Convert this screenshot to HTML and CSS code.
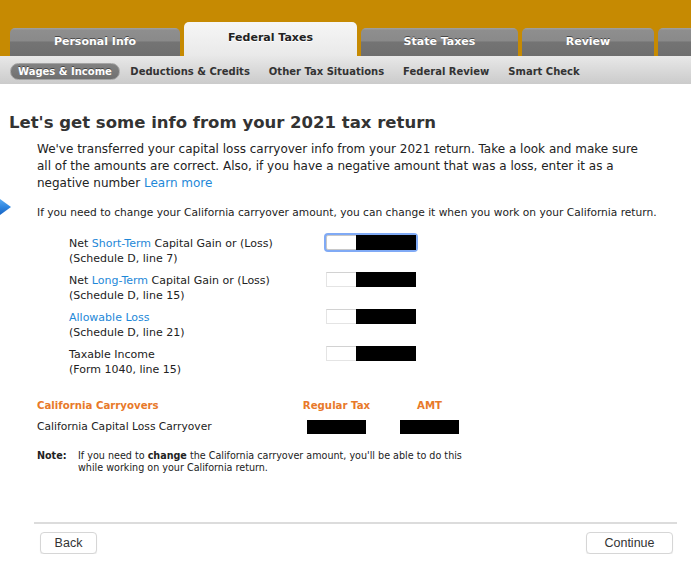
FILE: index.html
```html
<!DOCTYPE html>
<html lang="en">
<head>
<meta charset="utf-8">
<title>Federal Taxes - Capital loss carryover</title>
<link rel="stylesheet" href="styles.css">
</head>
<body>
<div class="topbar">
  <div class="tab tab-personal">Personal Info</div>
  <div class="tab tab-federal">Federal Taxes</div>
  <div class="tab tab-state">State Taxes</div>
  <div class="tab tab-review">Review</div>
  <div class="tab tab-more"></div>
</div>
<nav class="subnav">
  <span class="subnav-item current">Wages &amp; Income</span>
  <span class="subnav-item">Deductions &amp; Credits</span>
  <span class="subnav-item">Other Tax Situations</span>
  <span class="subnav-item">Federal Review</span>
  <span class="subnav-item">Smart Check</span>
</nav>
<main class="content">
  <h1 class="title">Let's get some info from your 2021 tax return</h1>
  <p class="intro">We've transferred your capital loss carryover info from your 2021 return. Take a look and make sure<br>all of the amounts are correct. Also, if you have a negative amount that was a loss, enter it as a<br>negative number <a class="link" href="#">Learn more</a></p>
  <p class="hint">
    <svg class="hint-arrow" viewBox="0 0 11 16" aria-hidden="true">
      <defs>
        <linearGradient id="ag" x1="0" y1="0" x2="0" y2="1">
          <stop offset="0" stop-color="#5aaaf2"/>
          <stop offset="0.5" stop-color="#2f86e0"/>
          <stop offset="1" stop-color="#1764c4"/>
        </linearGradient>
      </defs>
      <polygon points="0,0 11,8 0,16" fill="url(#ag)"/>
    </svg>
    If you need to change your California carryover amount, you can change it when you work on your California return.
  </p>
  <div class="fields">
    <div class="field">
      <div class="field-label">Net <a class="link" href="#">Short-Term</a> Capital Gain or (Loss)<br>(Schedule D, line 7)</div>
      <div class="amount focused"><span class="redact"></span></div>
    </div>
    <div class="field">
      <div class="field-label">Net <a class="link" href="#">Long-Term</a> Capital Gain or (Loss)<br>(Schedule D, line 15)</div>
      <div class="amount"><span class="redact"></span></div>
    </div>
    <div class="field">
      <div class="field-label"><a class="link" href="#">Allowable Loss</a><br>(Schedule D, line 21)</div>
      <div class="amount"><span class="redact"></span></div>
    </div>
    <div class="field">
      <div class="field-label">Taxable Income<br>(Form 1040, line 15)</div>
      <div class="amount"><span class="redact"></span></div>
    </div>
  </div>
  <div class="carry">
    <div class="carry-head">California Carryovers</div>
    <div class="carry-head center">Regular Tax</div>
    <div class="carry-head center">AMT</div>
    <div class="carry-label">California Capital Loss Carryover</div>
    <div class="center"><span class="block"></span></div>
    <div class="center"><span class="block"></span></div>
  </div>
  <div class="note">
    <div class="note-label">Note:</div>
    <div class="note-text">If you need to <b>change</b> the California carryover amount, you'll be able to do this<br>while working on your California return.</div>
  </div>
</main>
<footer class="footer">
  <button class="btn btn-back" type="button">Back</button>
  <button class="btn btn-continue" type="button">Continue</button>
</footer>
</body>
</html>
```
FILE: styles.css
```css
* { box-sizing: border-box; }
html, body { margin: 0; padding: 0; }
body {
  font-family: "DejaVu Sans", "Noto Sans", sans-serif;
  color: #222;
  background: #fff;
  width: 691px;
  overflow: hidden;
}

/* top tabs */
.topbar {
  height: 56px;
  background: #c68a02;
  display: flex;
  align-items: flex-end;
  gap: 4px;
  padding-left: 10px;
  overflow: hidden;
}
.tab {
  flex: none;
  height: 28px;
  border-radius: 5px 5px 0 0;
  background: linear-gradient(to bottom, #a2a2a2 0, #8e8e8e 8%, #8a8a8a 46%, #747474 50%, #6e6e6e 100%);
  color: #fff;
  font-weight: bold;
  font-size: 11px;
  text-align: center;
  line-height: 28px;
  text-shadow: 0 -1px 0 #4a4a4a;
}
.tab-personal { width: 170px; }
.tab-federal {
  width: 173px;
  height: 34px;
  background: linear-gradient(to bottom, #f6f6f6, #e9e9e9);
  color: #222;
  text-shadow: 0 1px 0 #fff;
  line-height: 31px;
}
.tab-state { width: 157px; }
.tab-review { width: 132px; }
.tab-more { width: 60px; }

/* sub navigation */
.subnav {
  height: 28px;
  padding-top: 2px;
  background: linear-gradient(to bottom, #e8e8e8, #cbcbcb);
  display: flex;
  align-items: center;
  padding-left: 10px;
  font-size: 10px;
  font-weight: bold;
  color: #333;
  white-space: nowrap;
}
.subnav-item { padding: 0 9.5px; }
.subnav-item.current {
  padding: 0 7px;
  height: 17px;
  line-height: 15px;
  border-radius: 9px;
  background: linear-gradient(to bottom, #828282, #6f6f6f);
  border: 1px solid #a4a4a4;
  color: #fff;
  text-shadow: 0 -1px 0 #444;
  margin-right: 1px;
}

/* content */
.title {
  margin: 29px 0 0 9px;
  font-size: 16.5px;
  line-height: 20px;
  font-weight: bold;
  color: #333;
}
.intro {
  margin: 8px 0 0 37px;
  font-size: 12px;
  line-height: 17px;
  color: #222;
}
.link { color: #1e88d8; text-decoration: none; }
.hint {
  position: relative;
  margin: 14px 0 0 37px;
  font-size: 10.65px;
  line-height: 14px;
}
.hint-arrow {
  position: absolute;
  left: -37px;
  top: -7px;
  width: 11px;
  height: 16px;
}

.fields {
  margin: 16px 0 0 69px;
  display: flex;
  flex-direction: column;
  gap: 7px;
}
.field { display: flex; align-items: flex-start; }
.field-label {
  width: 257px;
  font-size: 11px;
  line-height: 15px;
}
.amount {
  width: 90px;
  height: 15px;
  margin-top: -1px;
  display: flex;
  justify-content: flex-end;
  background: #fff;
  border: 1px solid #e4e4e4;
  border-top-color: #d2d2d2;
}
.amount .redact {
  width: 60px;
  margin: -1px -1px -1px 0;
  background: #000;
}
.amount.focused {
  border-color: #c8c8c8;
  box-shadow: 0 0 0 2px #80aaf5;
  border-radius: 2px;
}

.carry {
  margin: 21px 0 0 37px;
  display: grid;
  grid-template-columns: 253px 93px 93px;
  row-gap: 5px;
  font-size: 11px;
  line-height: 16px;
  align-items: center;
}
.carry-head { color: #e8792a; font-weight: bold; font-size: 10.2px; }
.carry-label { font-size: 10.7px; }
.center { text-align: center; }
.block {
  display: inline-block;
  width: 59px;
  height: 14px;
  background: #000;
  vertical-align: middle;
}

.note {
  margin: 15px 0 0 37px;
  display: flex;
  font-size: 9.6px;
  line-height: 12px;
}
.note-label { width: 41px; font-weight: bold; }

.footer {
  margin: 48px 14px 0 34px;
  border-top: 2px solid #dcdcdc;
  display: flex;
  justify-content: space-between;
  padding: 8px 4px 0 6px;
}
.btn {
  height: 22px;
  padding: 0;
  border: 1px solid #d6d6d6;
  border-radius: 4px;
  background: #fff;
  font-family: "Liberation Sans", Arial, sans-serif;
  font-size: 12.5px;
  color: #333;
  box-shadow: 0 1px 1px rgba(0, 0, 0, 0.08);
}
.btn-back { width: 57px; }
.btn-continue { width: 87px; }
```
